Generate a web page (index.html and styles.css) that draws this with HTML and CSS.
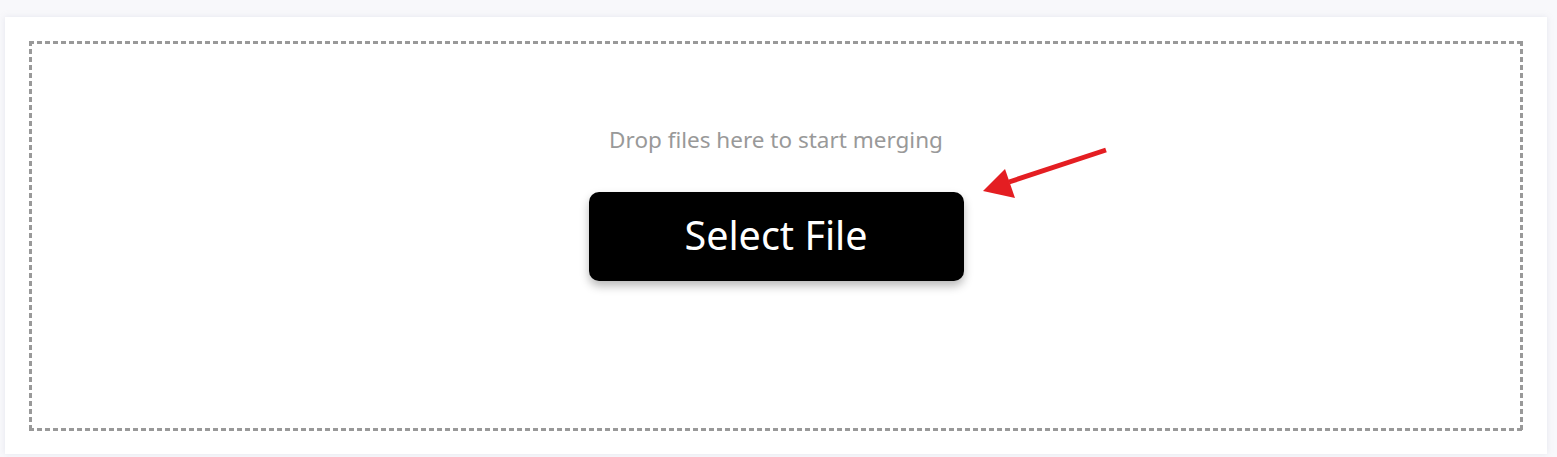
FILE: index.html
```html
<!DOCTYPE html>
<html lang="en">
<head>
<meta charset="utf-8">
<title>Merge files</title>
<link rel="stylesheet" href="styles.css">
</head>
<body>
<main class="card">
  <section class="dropzone">
    <p class="hint">Drop files here to start merging</p>
    <button class="select-btn" type="button">Select File</button>
    <svg class="arrow" width="140" height="70" viewBox="0 0 140 70" aria-hidden="true">
      <line x1="131" y1="10" x2="34" y2="42" stroke="#e41e22" stroke-width="5"/>
      <polygon points="8,51 30,29 40,58" fill="#e41e22"/>
    </svg>
  </section>
</main>
</body>
</html>
```
FILE: styles.css
```css
html, body {
  margin: 0;
  padding: 0;
}
body {
  background: #f8f8fb;
  width: 1557px;
  height: 457px;
  overflow: hidden;
  font-family: "Noto Sans", "Open Sans", sans-serif;
}
.card {
  box-sizing: border-box;
  margin: 17px 10px 0 5px;
  height: 437px;
  background: #ffffff;
  padding: 24px 24px 24px 24px;
  box-shadow: 0 0 6px rgba(180, 185, 205, 0.25);
}
.dropzone {
  position: relative;
  box-sizing: border-box;
  height: 390px;
  background:
    linear-gradient(90deg, #999999 5px, transparent 5px) left top / 8px 3px repeat-x,
    linear-gradient(90deg, #999999 5px, transparent 5px) left bottom / 8px 3px repeat-x,
    linear-gradient(180deg, #999999 5px, transparent 5px) left top / 3px 8px repeat-y,
    linear-gradient(180deg, #999999 5px, transparent 5px) right top / 3px 8px repeat-y;
  display: flex;
  flex-direction: column;
  align-items: center;
  padding-top: 85px;
}
.hint {
  margin: 0;
  font-size: 22.5px;
  line-height: 28px;
  color: #999999;
}
.select-btn {
  margin-top: 38px;
  width: 375px;
  height: 89px;
  border: none;
  border-radius: 10px;
  background: #000000;
  color: #ffffff;
  font-family: "Noto Sans", "Open Sans", sans-serif;
  font-size: 39.5px;
  line-height: 1;
  padding: 0 0 1px 0;
  box-shadow: 0 5px 10px rgba(0, 0, 0, 0.28);
  cursor: pointer;
}
.arrow {
  position: absolute;
  left: 946px;
  top: 99px;
}
```
